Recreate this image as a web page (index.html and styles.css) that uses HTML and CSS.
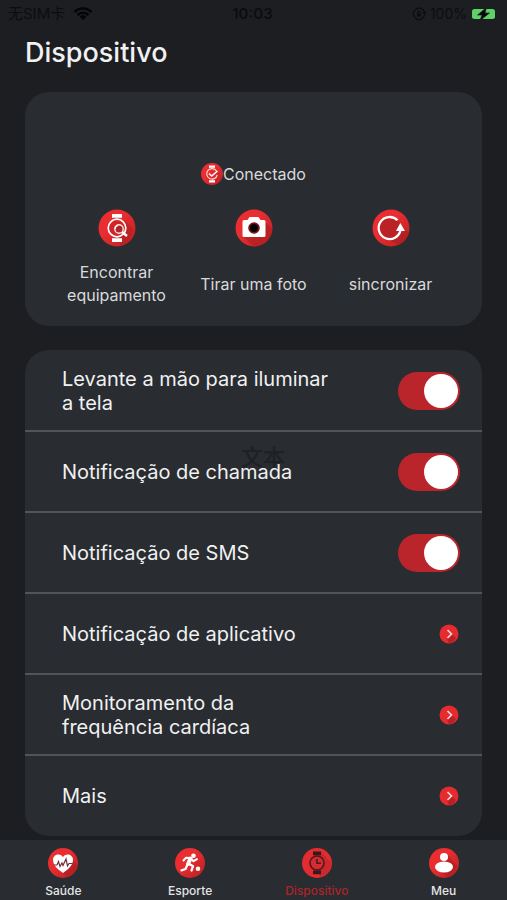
FILE: index.html
```html
<!DOCTYPE html>
<html lang="pt">
<head>
<meta charset="utf-8">
<meta name="viewport" content="width=device-width, initial-scale=1">
<title>Dispositivo</title>
<link rel="stylesheet" href="styles.css">
</head>
<body>
<svg class="defs" width="0" height="0" aria-hidden="true">
  <defs>
    <linearGradient id="red" x1="0" y1="0" x2="1" y2="1">
      <stop offset="0.4" stop-color="#e92d30"/>
      <stop offset="1" stop-color="#b81f22"/>
    </linearGradient>
    <symbol id="chevron" viewBox="0 0 20 20">
      <circle cx="10" cy="10" r="9.5" fill="#e62b30"/>
      <path d="M12.500 10l4.500 4a9.500 9.500 0 0 1-7 5.500l-2-5z" fill="#b92025"/>
      <path d="M8.500 6l4 4-4 4" fill="none" stroke="#ffd9d6" stroke-width="1.600"/>
    </symbol>
  </defs>
</svg>
<div class="app">
  <header class="status">
    <div class="status-left">
      <span>无SIM卡</span>
      <svg width="20" height="14" viewBox="0 0 20 14" aria-hidden="true">
        <path d="M1.500 5a12 12 0 0 1 17 0M4.500 8a8 8 0 0 1 11 0" fill="none" stroke="#050506" stroke-width="2.600"/>
        <path d="M6.600 9.600a5 5 0 0 1 6.800 0L10 13.300z" fill="#050506"/>
      </svg>
    </div>
    <time class="clock">10:03</time>
    <div class="status-right">
      <svg width="14" height="14" viewBox="0 0 14 14" fill="none" stroke="#0c0d0f" aria-hidden="true">
        <path d="M12.500 5.200A5.700 5.700 0 1 0 12.700 7.500M13.500 4.500l-1 2-2-1" stroke-width="1.300"/>
        <rect x="5" y="6.500" width="4" height="3" fill="#0c0d0f" stroke="none"/>
        <path d="M5.700 6.500V5.500a1.300 1.300 0 0 1 2.600 0v1"/>
      </svg>
      <span>100%</span>
      <svg width="26" height="14" viewBox="0 0 26 14" aria-hidden="true">
        <rect x="1" y="2" width="23" height="10" rx="2.500" fill="#5dd267"/>
        <path d="M24.800 5.500q1 1.500 0 3z" fill="#08090a"/>
        <path d="M15.500.5L6.500 8h4.500l-2 5.500 9.500-7.500H14z" fill="#08090a" stroke="#1d1f22" stroke-width=".7"/>
      </svg>
    </div>
  </header>

  <main class="content">
    <h1>Dispositivo</h1>

    <section class="card device">
      <p class="connection">
        <svg width="22" height="22" viewBox="0 0 22 22" aria-hidden="true">
          <circle cx="11" cy="11" r="11" fill="url(#red)"/>
          <path d="M8 2.500h6v2.300H8zM8 17.200h6v2.300H8z" fill="#fff"/>
          <path d="M15.500 8A5.300 5.300 0 1 0 16.200 12" fill="none" stroke="#ffd2cf" stroke-width="1.200"/>
          <path d="M8 10.500l2.700 2.500L16.500 8" fill="none" stroke="#fff" stroke-width="1.500"/>
        </svg>
        <span>Conectado</span>
      </p>
      <div class="actions">
        <button type="button" class="action">
          <svg width="38" height="38" viewBox="0 0 38 38" aria-hidden="true">
            <circle cx="19" cy="19" r="18.500" fill="url(#red)"/>
            <path d="M26 11l9 9a18 18 0 0 1-11 16.500L17 31z" fill="#b32023" opacity=".65"/>
            <path d="M14 5h10v3.800H14zM14 29.200h10V33H14z" fill="#fff"/>
            <circle cx="19" cy="19" r="8.800" fill="#cf2529" stroke="#fff" stroke-width="1.700"/>
            <circle cx="21" cy="20" r="4.200" fill="#ad2528" stroke="#ffe0de" stroke-width="1.400"/>
            <path d="M17 20a4 4 0 0 1 3-3.500" fill="none" stroke="#fff" stroke-width="1.200"/>
            <path d="M24 23l5 4" stroke="#fff" stroke-width="2.400"/>
          </svg>
          <span>Encontrar equipamento</span>
        </button>
        <button type="button" class="action">
          <svg width="38" height="38" viewBox="0 0 38 38" aria-hidden="true">
            <circle cx="19" cy="19" r="18.500" fill="url(#red)"/>
            <path d="M30 13l7 7a18 18 0 0 1-18 17.500L8.500 28z" fill="#b32023" opacity=".75"/>
            <path d="M9 11h3.500l2-3h9l2 3H29a1.500 1.500 0 0 1 1.500 1.500v14A1.500 1.500 0 0 1 29 28H9a1.500 1.500 0 0 1-1.500-1.500v-14A1.500 1.500 0 0 1 9 11z" fill="#fff"/>
            <circle cx="19" cy="19" r="5.800" fill="#76151a"/>
            <circle cx="19" cy="19" r="3.900" fill="#050001"/>
          </svg>
          <span>Tirar uma foto</span>
        </button>
        <button type="button" class="action">
          <svg width="38" height="38" viewBox="0 0 38 38" aria-hidden="true">
            <circle cx="19" cy="19" r="18.500" fill="url(#red)"/>
            <path d="M29 16l8 8a18 18 0 0 1-10 12L10 28z" fill="#a91e21" opacity=".65"/>
            <circle cx="18" cy="19" r="11" fill="#bb2225"/>
            <path d="M25.500 11.300A11 11 0 1 0 28.500 21" fill="none" stroke="#fff" stroke-width="2.300"/>
            <path d="M28.300 14l4.700 8h-9z" fill="#fff"/>
          </svg>
          <span>sincronizar</span>
        </button>
      </div>
    </section>

    <section class="card settings">
      <label class="row">
        <span class="row-text">Levante a mão para iluminar a tela</span>
        <input class="switch" type="checkbox" role="switch" checked>
      </label>
      <label class="row">
        <span class="row-text">Notificação de chamada</span>
        <input class="switch" type="checkbox" role="switch" checked>
        <span class="toast">文本</span>
      </label>
      <label class="row">
        <span class="row-text">Notificação de SMS</span>
        <input class="switch" type="checkbox" role="switch" checked>
      </label>
      <a class="row" href="#aplicativo">
        <span class="row-text">Notificação de aplicativo</span>
        <svg class="chevron" width="20" height="20" aria-hidden="true"><use href="#chevron"/></svg>
      </a>
      <a class="row" href="#frequencia">
        <span class="row-text">Monitoramento da frequência cardíaca</span>
        <svg class="chevron" width="20" height="20" aria-hidden="true"><use href="#chevron"/></svg>
      </a>
      <a class="row" href="#mais">
        <span class="row-text">Mais</span>
        <svg class="chevron" width="20" height="20" aria-hidden="true"><use href="#chevron"/></svg>
      </a>
    </section>
  </main>

  <nav class="tabs">
    <a class="tab" href="#saude">
      <svg width="30" height="30" viewBox="0 0 30 30" aria-hidden="true">
        <circle cx="15" cy="15" r="15" fill="url(#red)"/>
        <path d="M24 11l5 6a15 15 0 0 1-10 12l-5-5z" fill="#a91e21" opacity=".6"/>
        <path d="M15 25C10 21.500 5 17.500 5 11.800 5 6.500 12 4.500 15 9c3-4.500 10-2.500 10 2.800C25 17.500 20 21.500 15 25z" fill="#fff"/>
        <path d="M5.500 17h3.500l1.500-3.500 1.500 5 2-3.500 1 2.500 3-6.500 1.500 7 1.500-2.500h3.500" fill="none" stroke="#713039" stroke-width="1.200"/>
      </svg>
      <span>Saúde</span>
    </a>
    <a class="tab" href="#esporte">
      <svg width="30" height="30" viewBox="0 0 30 30" aria-hidden="true">
        <circle cx="15" cy="15" r="15" fill="url(#red)"/>
        <g fill="none" stroke="#fff" stroke-linecap="round" stroke-linejoin="round">
          <path d="M8.500 12.500l2.500-2.700 4.500.2 3 3.200 3.500-2" stroke-width="2"/>
          <path d="M15.500 10.500L13 16" stroke-width="4"/>
          <path d="M13.500 15.500l4.500 2.800-1.500 4.200M12 17.500L10.500 21l-4 1.300" stroke-width="2.300"/>
        </g>
        <circle cx="18.500" cy="7.800" r="2.300" fill="#fff"/>
        <circle cx="23" cy="20.800" r="2.300" fill="#fff"/>
      </svg>
      <span>Esporte</span>
    </a>
    <a class="tab active" href="#dispositivo" aria-current="page">
      <svg width="30" height="30" viewBox="0 0 30 30" aria-hidden="true">
        <circle cx="15" cy="15" r="15" fill="#e42c30"/>
        <path d="M19 4l10 10a15 15 0 0 1-10 15l-5-6z" fill="#bd2529" opacity=".6"/>
        <path d="M11 3.500h8v3.800h-8zM11 22.500h8v3.800h-8z" fill="#35191c"/>
        <circle cx="15" cy="15" r="7" fill="#d62b2f" stroke="#4b1b1f" stroke-width="1.600"/>
        <path d="M15 11v4.200h4" fill="none" stroke="#4b1b1f" stroke-width="1.600"/>
      </svg>
      <span>Dispositivo</span>
    </a>
    <a class="tab" href="#meu">
      <svg width="30" height="30" viewBox="0 0 30 30" aria-hidden="true">
        <circle cx="15" cy="15" r="15" fill="url(#red)"/>
        <path d="M18 6l10 12a15 15 0 0 1-9 11L8 22z" fill="#a91e21" opacity=".6"/>
        <circle cx="15" cy="9" r="4" fill="#fff"/>
        <ellipse cx="15" cy="19" rx="9" ry="5.500" fill="#fff"/>
      </svg>
      <span>Meu</span>
    </a>
  </nav>
</div>
</body>
</html>
```
FILE: styles.css
```css
* {
  box-sizing: border-box;
}

body {
  margin: 0;
  background: #1d1e22;
  color: #f0f1f2;
  font-family: Inter, "Noto Sans CJK SC", sans-serif;
}

.defs {
  position: absolute;
}

.app {
  display: flex;
  flex-direction: column;
  min-height: 100vh;
}

.status {
  display: grid;
  grid-template-columns: 1fr auto 1fr;
  align-items: center;
  height: 28px;
  padding: 0 10px 0 8px;
  color: #0c0d0f;
  font-size: 14px;
  line-height: 20px;
}

.status-left,
.status-right {
  display: flex;
  align-items: center;
  gap: 4px;
}

.status-left {
  gap: 8px;
  font-size: 15px;
}

.status-right {
  justify-content: flex-end;
}

.clock {
  font-size: 15px;
  font-weight: 600;
}

.content {
  flex: 1;
  padding: 9px 25px 4px;
}

h1 {
  margin: 0 0 23px;
  font-size: 27px;
  font-weight: 500;
  line-height: 32px;
}

.card {
  background: #292c30;
  border-radius: 24px;
}

.device {
  margin-bottom: 24px;
  padding: 70px 23px 19px;
}

.connection {
  display: flex;
  align-items: center;
  justify-content: center;
  margin: 0 0 23px;
  color: #d9dadc;
  font-size: 16px;
  line-height: 24px;
}

.actions {
  display: grid;
  grid-template-columns: repeat(3, 1fr);
}

.action {
  display: flex;
  flex-direction: column;
  align-items: center;
  gap: 14px;
  padding: 0 12px;
  border: 0;
  background: none;
  color: #d9dadc;
  font: inherit;
  font-size: 16px;
  line-height: 23px;
}

.action svg {
  flex: none;
}

.action span {
  display: flex;
  align-items: center;
  min-height: 46px;
}

.row {
  position: relative;
  display: flex;
  align-items: center;
  justify-content: space-between;
  height: 81px;
  padding: 0 22px 0 37px;
  color: inherit;
  font-size: 20px;
  line-height: 24px;
  text-decoration: none;
}

.row + .row::before {
  content: "";
  position: absolute;
  top: -1px;
  right: 0;
  left: 0;
  height: 2px;
  background: #515459;
}

.row-text {
  max-width: 272px;
}

.switch {
  appearance: none;
  display: flex;
  align-items: center;
  justify-content: flex-end;
  width: 62px;
  height: 38px;
  margin: 0;
  padding: 2px;
  border-radius: 19px;
  background: #b9252b;
}

.switch::before {
  content: "";
  width: 34px;
  height: 34px;
  border-radius: 50%;
  background: #fff;
}

.switch:not(:checked) {
  justify-content: flex-start;
  background: #515459;
}

.chevron {
  margin-right: 1px;
}

.toast {
  position: absolute;
  top: 14px;
  left: 216px;
  color: #1f2024;
  font-size: 22px;
  font-weight: 500;
}

.tabs {
  display: grid;
  grid-template-columns: repeat(4, 1fr);
  height: 60px;
  background: #292c30;
}

.tab {
  display: flex;
  flex-direction: column;
  align-items: center;
  gap: 5px;
  padding-top: 8px;
  color: #e3e4e6;
  font-size: 12px;
  font-weight: 500;
  line-height: 16px;
  text-decoration: none;
}

.tab.active {
  color: #a8262c;
}
```
